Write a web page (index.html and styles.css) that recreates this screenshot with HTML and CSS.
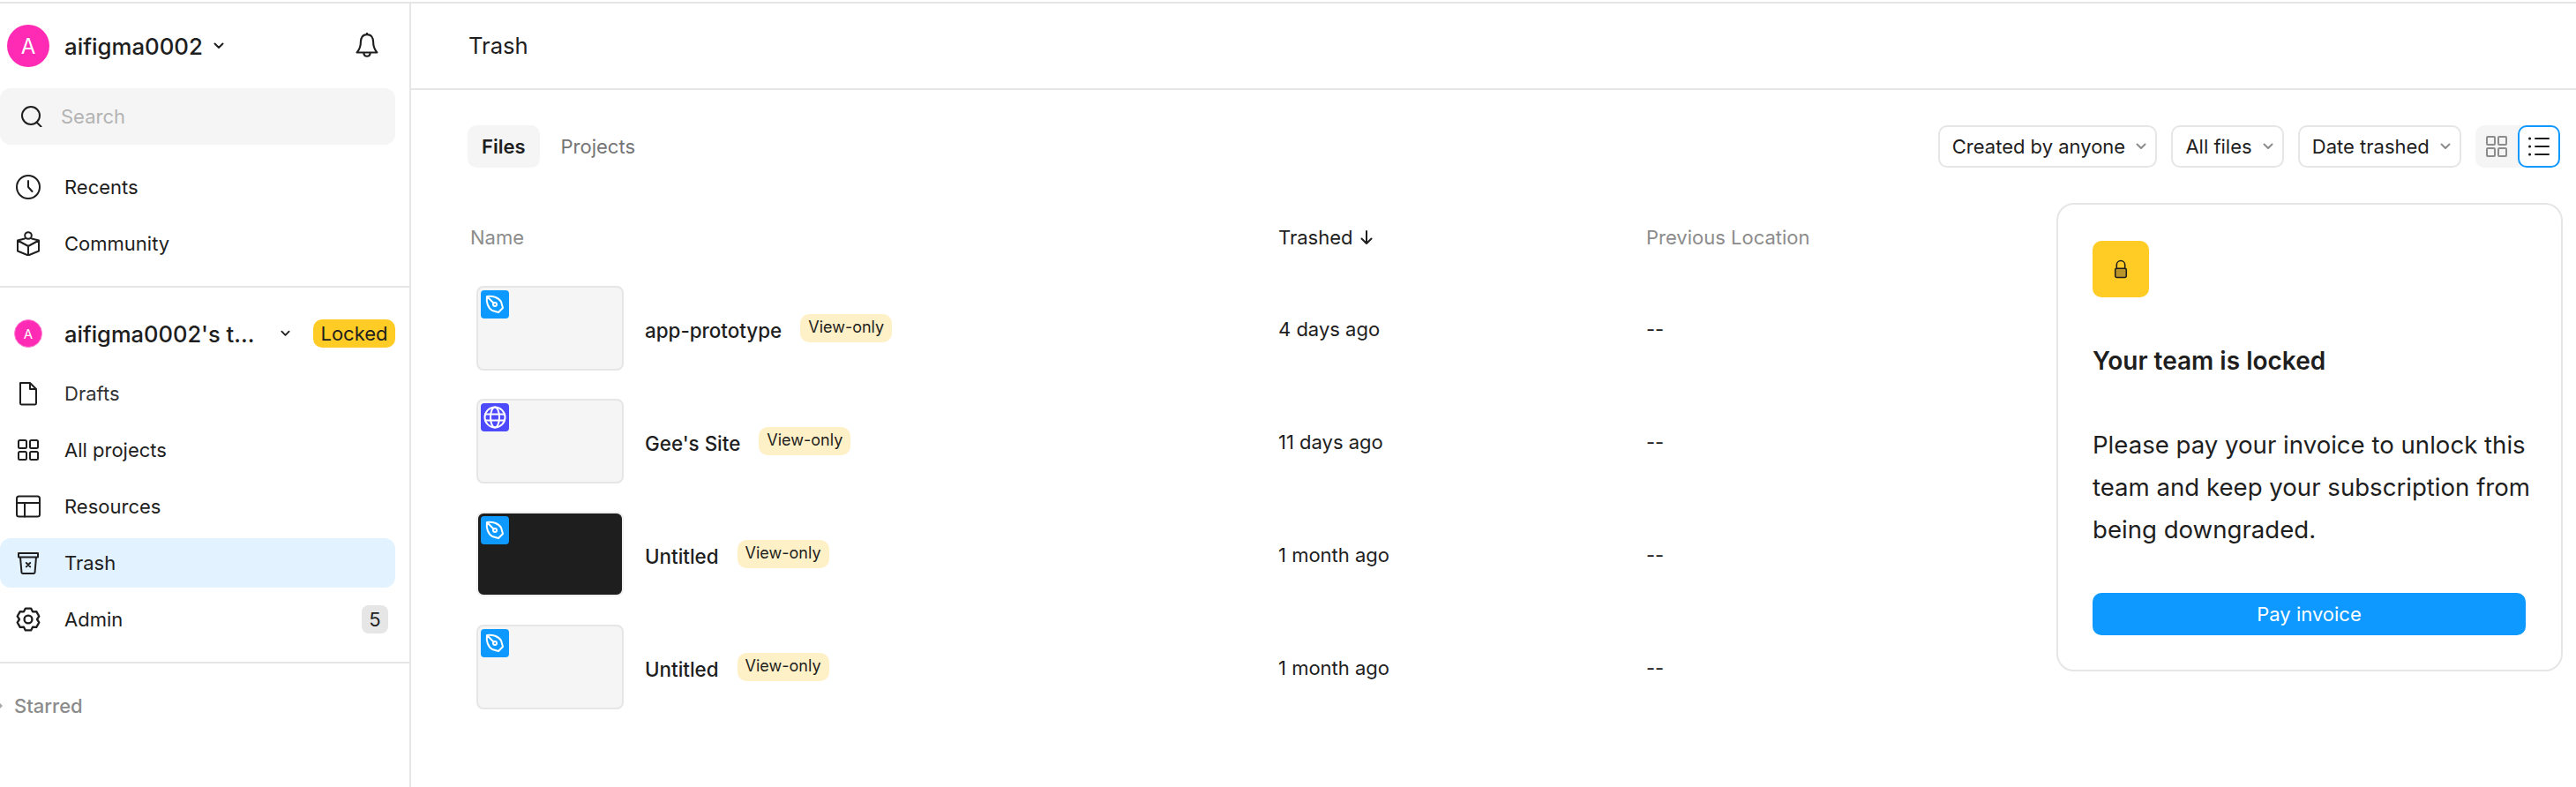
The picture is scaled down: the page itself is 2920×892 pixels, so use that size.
FILE: index.html
```html
<!DOCTYPE html>
<html>
<head>
  <title>Trash</title>
  <link rel="stylesheet" href="styles.css">
</head>
<body>
<div class="page">
  <nav class="sidebar">
    <div class="account">
      <span class="avatar">A</span>
      <span class="account-name">aifigma0002</span>
      <svg class="chev chev-dark" viewBox="0 0 12 8"><path d="M1.5 1.5 6 6l4.5-4.5"/></svg>
      <svg class="bell" viewBox="0 0 24 28"><path d="M12 2c-4.6 0-6.6 3.6-6.6 7.6 0 5.800-1.600 8.600-4 11.400h21.200c-2.400-2.800-4-5.600-4-11.400C18.600 5.600 16.600 2 12 2ZM8.600 21.200c0 2.200 1.400 3.800 3.400 3.800s3.400-1.600 3.400-3.800M12 2V.8"/></svg>
    </div>
    <div class="search">
      <svg class="icon" viewBox="0 0 24 24"><circle cx="11" cy="11" r="10"/><path d="m17.500 18.500 5 5"/></svg>
      <span>Search</span>
    </div>
    <div class="nav-group nav-top">
      <div class="nav-item">
        <svg class="icon" viewBox="0 0 28 28"><circle cx="14" cy="14" r="13"/><path d="M14 7v7l4.500 5"/></svg>
        <span>Recents</span>
      </div>
      <div class="nav-item">
        <svg class="icon" viewBox="0 0 28 28"><circle cx="14" cy="5" r="3.800"/><path d="M10 8.500 2 10.500v12l12 5 12-5v-12L18 8.500M2 10.500l12 6.500 12-6.500M14 17v10.500"/></svg>
        <span>Community</span>
      </div>
    </div>
    <div class="nav-group nav-team">
      <div class="team">
        <span class="avatar avatar-small">A</span>
        <span class="team-name">aifigma0002's t...</span>
        <svg class="chev chev-dark" viewBox="0 0 12 8"><path d="M1.500 1.500 6 6l4.500-4.500"/></svg>
        <span class="locked">Locked</span>
      </div>
      <div class="nav-item">
        <svg class="icon" viewBox="0 0 28 28"><path d="M5 2h11l7 7v16a1.500 1.500 0 0 1-1.500 1.500h-15A1.500 1.500 0 0 1 5 25V2ZM16 2v7h7"/></svg>
        <span class="soft">Drafts</span>
      </div>
      <div class="nav-item">
        <svg class="icon" viewBox="0 0 28 28"><rect x="3" y="3" width="9" height="9" rx="1.500"/><rect x="16" y="3" width="9" height="9" rx="1.500"/><rect x="3" y="16" width="9" height="9" rx="1.500"/><rect x="16" y="16" width="9" height="9" rx="1.500"/></svg>
        <span>All projects</span>
      </div>
      <div class="nav-item">
        <svg class="icon" viewBox="0 0 28 28"><rect x="1" y="2.500" width="26" height="23" rx="2.500"/><path d="M1 10h26M10 10v15.500"/></svg>
        <span>Resources</span>
      </div>
      <div class="nav-item nav-active">
        <svg class="icon" viewBox="0 0 28 28"><path d="M3 3h22v4.500H3zM5 7.500 6.500 25a1.500 1.500 0 0 0 1.500 1h12a1.500 1.500 0 0 0 1.500-1L23 7.500M11.800 14l4.400 4.400M16.200 14l-4.400 4.400"/></svg>
        <span>Trash</span>
      </div>
      <div class="nav-item">
        <svg class="icon" viewBox="0 0 24 24"><path d="M14.660 1.330 9.340 1.330 7.700 4.550 4.090 4.360 1.430 8.970 3.400 12 1.430 15.030 4.090 19.640 7.700 19.450 9.340 22.670 14.660 22.670 16.300 19.450 19.910 19.640 22.570 15.030 20.600 12 22.570 8.970 19.910 4.360 16.300 4.550Z"/><circle cx="12" cy="12" r="3.800"/></svg>
        <span>Admin</span>
        <span class="count">5</span>
      </div>
    </div>
    <div class="starred">
      <svg class="starred-arrow" viewBox="0 0 6 12"><path d="M0 1.500 4.500 6 0 10.500z"/></svg>
      <span>Starred</span>
    </div>
  </nav>

  <main class="main">
    <header class="main-header">Trash</header>

    <div class="toolbar">
      <div class="tabs">
        <span class="tab tab-on">Files</span>
        <span class="tab">Projects</span>
      </div>
      <div class="filters">
        <span class="filter">Created by anyone <svg class="chev" viewBox="0 0 12 8"><path d="M1.500 1.500 6 6l4.500-4.500"/></svg></span>
        <span class="filter">All files <svg class="chev" viewBox="0 0 12 8"><path d="M1.500 1.500 6 6l4.500-4.500"/></svg></span>
        <span class="filter">Date trashed <svg class="chev" viewBox="0 0 12 8"><path d="M1.500 1.500 6 6l4.500-4.500"/></svg></span>
        <div class="view-toggle">
          <span class="view-btn">
            <svg class="view-icon view-icon-grey" viewBox="0 0 24 24"><rect x="1" y="1" width="9" height="9" rx="1"/><rect x="14" y="1" width="9" height="9" rx="1"/><rect x="1" y="14" width="9" height="9" rx="1"/><rect x="14" y="14" width="9" height="9" rx="1"/></svg>
          </span>
          <span class="view-btn view-btn-on">
            <svg class="view-icon" viewBox="0 0 24 24"><path d="M8 3h15M8 12h15M8 21h15"/><path class="dots" d="M1.500 3h.1M1.500 12h.1M1.500 21h.1"/></svg>
          </span>
        </div>
      </div>
    </div>

    <div class="content">
      <section class="table">
        <div class="row head">
          <span class="head-name">Name</span>
          <span class="head-sort">Trashed<svg class="arrow" viewBox="0 0 14 16"><path d="M7 1v14M1.500 9.500 7 15l5.500-5.500"/></svg></span>
          <span>Previous Location</span>
        </div>

        <div class="row file">
          <div class="file-name">
            <div class="thumb">
              <span class="badge"><svg viewBox="0 0 32 32"><path d="M7 7c6-1 13 1 16 6l2 7-5 5-7-2C8 20 6 13 7 7ZM7 7l7.500 7.500"/><circle cx="16" cy="16" r="2"/></svg></span>
            </div>
            <span class="title">app-prototype</span>
            <span class="view-only">View-only</span>
          </div>
          <span>4 days ago</span>
          <span>--</span>
        </div>

        <div class="row file">
          <div class="file-name">
            <div class="thumb">
              <span class="badge badge-site"><svg viewBox="0 0 32 32"><circle cx="16" cy="16" r="11.500"/><ellipse cx="16" cy="16" rx="5" ry="11.500"/><path d="M5 12.500h22M5 19.500h22"/></svg></span>
            </div>
            <span class="title">Gee's Site</span>
            <span class="view-only">View-only</span>
          </div>
          <span>11 days ago</span>
          <span>--</span>
        </div>

        <div class="row file">
          <div class="file-name">
            <div class="thumb thumb-dark">
              <span class="badge"><svg viewBox="0 0 32 32"><path d="M7 7c6-1 13 1 16 6l2 7-5 5-7-2C8 20 6 13 7 7ZM7 7l7.500 7.500"/><circle cx="16" cy="16" r="2"/></svg></span>
            </div>
            <span class="title">Untitled</span>
            <span class="view-only">View-only</span>
          </div>
          <span>1 month ago</span>
          <span>--</span>
        </div>

        <div class="row file">
          <div class="file-name">
            <div class="thumb">
              <span class="badge"><svg viewBox="0 0 32 32"><path d="M7 7c6-1 13 1 16 6l2 7-5 5-7-2C8 20 6 13 7 7ZM7 7l7.500 7.500"/><circle cx="16" cy="16" r="2"/></svg></span>
            </div>
            <span class="title">Untitled</span>
            <span class="view-only">View-only</span>
          </div>
          <span>1 month ago</span>
          <span>--</span>
        </div>
      </section>

      <aside class="card">
        <span class="lock-tile">
          <svg viewBox="0 0 20 28"><path d="M4 13V8a6 6 0 0 1 12 0v5" fill="none"/><rect class="lock-body" x="2" y="13" width="16" height="13" rx="2"/></svg>
        </span>
        <h2>Your team is locked</h2>
        <p>Please pay your invoice to unlock this team and keep your subscription from being downgraded.</p>
        <button class="pay">Pay invoice</button>
      </aside>
    </div>
  </main>
</div>
</body>
</html>
```

FILE: styles.css
```css
* {
  box-sizing: border-box;
}
body {
  margin: 0;
  height: 892px;
  overflow: hidden;
  background-color: #ffffff;
  font-family: Inter, "Noto Sans", sans-serif;
  font-size: 22px;
  color: #1e1e1e;
}
svg {
  fill: none;
  stroke: currentColor;
  stroke-width: 2;
  stroke-linecap: round;
  stroke-linejoin: round;
}
.page {
  display: flex;
  height: 890px;
  margin-top: 2px;
  border-top: 2px solid #e6e6e6;
}

/* sidebar */
.sidebar {
  flex: 0 0 466px;
  border-right: 2px solid #e6e6e6;
}
.account {
  display: flex;
  align-items: center;
  height: 96px;
  padding: 0 35px 0 8px;
}
.avatar {
  display: flex;
  align-items: center;
  justify-content: center;
  width: 48px;
  height: 48px;
  border-radius: 50%;
  background-color: #ff2bb5;
  color: #ffffff;
  font-size: 24px;
}
.avatar-small {
  width: 32px;
  height: 32px;
  margin-left: 16px;
  font-size: 15px;
  border: 1px solid #ff7fd2;
}
.account-name {
  margin-left: 17px;
  font-size: 25.8px;
  font-weight: 500;
}
.chev {
  flex: none;
  width: 12px;
  height: 8px;
  margin-left: 6px;
  color: #8c8c8c;
}
.chev-dark {
  color: #1e1e1e;
  margin-left: 12px;
}
.bell {
  width: 26px;
  height: 30px;
  margin-left: auto;
}
.search {
  display: flex;
  align-items: center;
  width: 448px;
  height: 64px;
  padding-left: 24px;
  border-radius: 12px;
  background-color: #f5f5f5;
  color: #b3b3b3;
}
.search .icon {
  width: 24px;
  height: 24px;
  margin-right: 21px;
  color: #1e1e1e;
}
.nav-group {
  width: 464px;
  padding-bottom: 16px;
  border-bottom: 2px solid #e6e6e6;
}
.nav-top {
  padding-top: 16px;
}
.nav-team {
  padding-top: 20px;
}
.nav-item {
  display: flex;
  align-items: center;
  width: 448px;
  height: 64px;
  padding-left: 18px;
}
.icon {
  flex: none;
  width: 28px;
  height: 28px;
  margin-right: 27px;
}
.soft {
  color: #333333;
}
.nav-active {
  height: 56px;
  margin: 4px 0;
  border-radius: 12px;
  background-color: #e2f3ff;
}
.count {
  margin-left: auto;
  margin-right: 8px;
  width: 30px;
  height: 32px;
  border-radius: 8px;
  background-color: #e6e6e6;
  text-align: center;
  line-height: 32px;
}
.team {
  display: flex;
  align-items: center;
  width: 448px;
  height: 64px;
  margin-bottom: 4px;
}
.team-name {
  width: 212px;
  margin-left: 25px;
  font-size: 25.5px;
  font-weight: 500;
  white-space: nowrap;
}
.team .chev {
  margin-left: 33px;
  width: 11px;
}
.locked {
  margin-left: auto;
  width: 93px;
  height: 32px;
  border-radius: 10px;
  background-color: #ffcb25;
  text-align: center;
  line-height: 32px;
}
.starred {
  display: flex;
  align-items: center;
  height: 96px;
  color: #8c8c8c;
  font-weight: 500;
}
.starred-arrow {
  width: 4px;
  height: 12px;
  margin-right: 12px;
  fill: #a8a8a8;
  stroke: none;
}

/* main area */
.main {
  flex: 1;
  min-width: 0;
}
.main-header {
  height: 98px;
  padding: 0 0 0 65px;
  border-bottom: 2px solid #e6e6e6;
  line-height: 96px;
  font-size: 25.6px;
}
.toolbar {
  display: flex;
  justify-content: space-between;
  height: 48px;
  margin-top: 40px;
  padding: 0 18px 0 64px;
}
.tabs {
  display: flex;
  gap: 8px;
}
.tab {
  padding: 0 16px;
  border-radius: 10px;
  line-height: 48px;
  color: #757575;
}
.tab-on {
  background-color: #f5f5f5;
  color: #1e1e1e;
  font-weight: 600;
}
.filters {
  display: flex;
  gap: 16px;
}
.filter {
  display: flex;
  align-items: center;
  padding: 0 10px 0 14px;
  border: 2px solid #e6e6e6;
  border-radius: 10px;
  white-space: pre;
}
.view-toggle {
  display: flex;
  width: 96px;
  border-radius: 10px;
  background-color: #f5f5f5;
}
.view-btn {
  display: flex;
  align-items: center;
  justify-content: center;
  width: 48px;
}
.view-btn-on {
  background-color: #ffffff;
  border: 2px solid #0d99ff;
  border-radius: 10px;
}
.view-icon {
  width: 24px;
  height: 24px;
}
.view-icon-grey {
  color: #8c8c8c;
}
.dots {
  stroke-width: 3;
}

/* trash table */
.content {
  display: flex;
  padding-left: 64px;
  align-items: flex-start;
}
.table {
  width: 1801px;
  padding-top: 55px;
}
.row {
  display: grid;
  grid-template-columns: 916px 417px 1fr;
  align-items: center;
}
.row > span {
  padding-left: 3px;
}
.head {
  height: 48px;
  color: #8c8c8c;
  margin-bottom: 31px;
}
.head-sort {
  display: flex;
  align-items: center;
  color: #1e1e1e;
}
.arrow {
  width: 14px;
  height: 16px;
  margin-left: 8px;
}
.file {
  height: 128px;
  align-items: start;
  line-height: 98px;
}
.file-name {
  display: flex;
  align-items: center;
  height: 96px;
  padding-left: 10px;
}
.thumb {
  flex: none;
  width: 167px;
  height: 96px;
  padding: 3px;
  border: 2px solid #e6e6e6;
  border-radius: 8px;
  background-color: #f5f5f5;
}
.thumb-dark {
  background-color: #1e1e1e;
  border-color: #f0f0f0;
}
.badge {
  display: block;
  width: 32px;
  height: 32px;
  border-radius: 4px;
  background-color: #0d99ff;
  color: #ffffff;
}
.badge svg {
  display: block;
  width: 32px;
  height: 32px;
}
.badge-site {
  background-color: #4d49fc;
}
.title {
  margin-left: 24px;
  font-size: 22.4px;
  font-weight: 500;
  line-height: normal;
  padding-top: 4px;
}
.view-only {
  margin-left: 21px;
  height: 32px;
  padding: 0 9px;
  border-radius: 10px;
  background-color: #fff1c7;
  font-size: 18px;
  line-height: 30px;
}

/* locked card */
.card {
  flex: none;
  width: 574px;
  height: 531px;
  margin-top: 40px;
  padding: 41px 25px 0 39px;
  border: 2px solid #e6e6e6;
  border-radius: 20px;
  background-color: #ffffff;
}
.lock-tile {
  display: flex;
  align-items: center;
  justify-content: center;
  width: 64px;
  height: 64px;
  border-radius: 10px;
  background-color: #ffcb25;
}
.lock-tile svg {
  width: 16px;
  height: 22px;
}
.lock-body {
  fill: #b8942a;
}
.card h2 {
  margin: 52px 0 0;
  font-size: 28px;
  font-weight: 600;
  line-height: 40px;
}
.card p {
  margin: 51px 0 0;
  font-size: 27.6px;
  line-height: 48px;
}
.pay {
  display: block;
  width: 491px;
  height: 48px;
  margin-top: 48px;
  border: 0;
  border-radius: 10px;
  background-color: #0d99ff;
  color: #ffffff;
  font-family: inherit;
  font-size: 22px;
}
```
